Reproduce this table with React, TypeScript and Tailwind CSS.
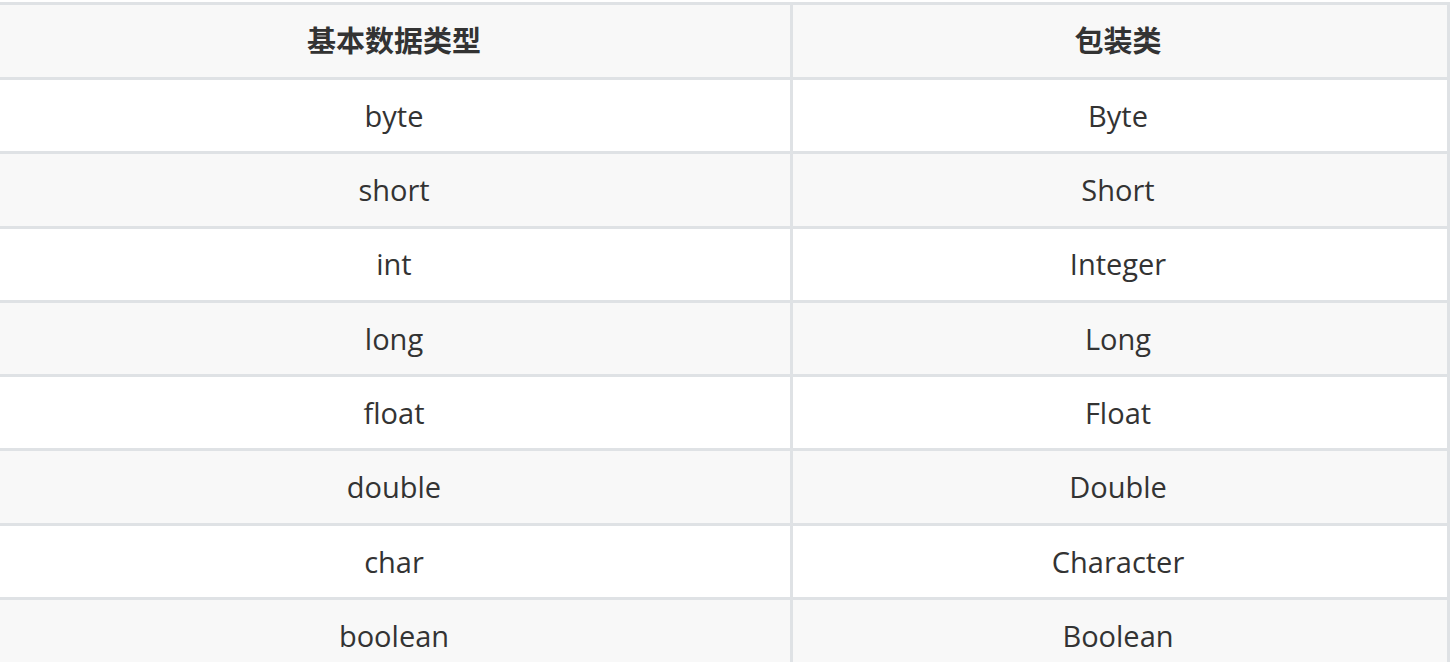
const rows: [string, string][] = [
  ['byte', 'Byte'],
  ['short', 'Short'],
  ['int', 'Integer'],
  ['long', 'Long'],
  ['float', 'Float'],
  ['double', 'Double'],
  ['char', 'Character'],
  ['boolean', 'Boolean'],
];

export default function App() {
  return (
    <div className="w-[1453px] h-[662px] overflow-hidden bg-white">
      <div
        className="mt-[2px] -ml-[5px] w-[1455px] border-r-[3px] border-[#dfe2e5] text-[#333333] text-[29px]"
        style={{ fontFamily: '"Open Sans", "Noto Sans CJK SC", sans-serif' }}
      >
        {/* header */}
        <div className="flex h-[75px] border-t-[3px] border-[#dfe2e5] bg-[#f8f8f8] font-bold">
          <div className="w-[795px] border-l-[3px] border-[#dfe2e5] flex items-center justify-center">
            基本数据类型
          </div>
          <div className="w-[657px] border-l-[3px] border-[#dfe2e5] pr-[4px] flex items-center justify-center">
            包装类
          </div>
        </div>
        {rows.map(([prim, wrap], i) => (
          <div
            key={prim}
            className={`flex h-[74.3px] border-t-[3px] border-[#dfe2e5] ${i % 2 === 0 ? 'bg-white' : 'bg-[#f8f8f8]'}`}
          >
            <div className="w-[795px] border-l-[3px] border-[#dfe2e5] flex items-center justify-center">
              {prim}
            </div>
            <div className="w-[657px] border-l-[3px] border-[#dfe2e5] pr-[4px] flex items-center justify-center">
              {wrap}
            </div>
          </div>
        ))}
      </div>
    </div>
  );
}
